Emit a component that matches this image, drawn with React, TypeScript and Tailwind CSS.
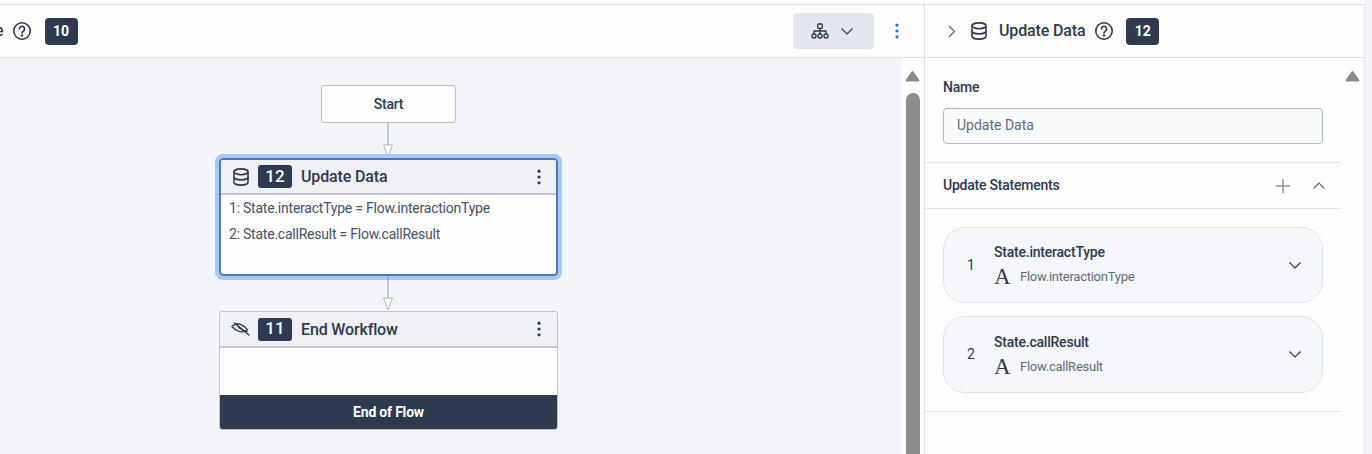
import React from "react";

const Help = () => (
  <svg width="20" height="20" viewBox="0 0 20 20" fill="none" stroke="#2d3a4f" strokeWidth="1.6" strokeLinecap="round" strokeLinejoin="round">
    <circle cx="10" cy="10" r="8.2" />
    <path d="M7.400 7.900a2.600 2.600 0 1 1 4.100 2.100c-1 .7-1.500 1-1.500 2.100" />
    <circle cx="10" cy="14.500" r=".5" fill="#2d3a4f" />
  </svg>
);

const Db = () => (
  <svg width="18" height="18" viewBox="0 0 18 18" fill="none" stroke="#2d3a4f" strokeWidth="1.6">
    <ellipse cx="9" cy="3.800" rx="7" ry="2.900" />
    <path d="M2 3.800v10.400c0 1.600 3.100 2.900 7 2.900s7-1.300 7-2.900V3.800" />
    <path d="M2 9c0 1.600 3.100 2.900 7 2.900s7-1.300 7-2.900" />
  </svg>
);

const Kebab = ({ color = "#2d3a4f" }: { color?: string }) => (
  <svg width="4" height="16" viewBox="0 0 4 16" fill={color}>
    <circle cx="2" cy="2.200" r="1.600" />
    <circle cx="2" cy="8" r="1.600" />
    <circle cx="2" cy="13.800" r="1.600" />
  </svg>
);

const Chevron = ({ up = false, color = "#2d3a4f" }: { up?: boolean; color?: string }) => (
  <svg width="12" height="7" viewBox="0 0 12 7" fill="none" stroke={color} strokeWidth="1.200">
    <path d={up ? "M.5 6.500L6 1l5.500 5.500" : "M.5.500L6 6 11.500.5"} />
  </svg>
);

const Hierarchy = () => (
  <svg width="18" height="16" viewBox="0 0 18 16" fill="none" stroke="#2d3a4f" strokeWidth="1.400">
    <rect x="6.800" y="1" width="4.400" height="4.400" rx=".8" />
    <path d="M9 5.400V8M3 11V8h12v3M9 8v3" />
    <circle cx="3" cy="13" r="2" />
    <circle cx="9" cy="13" r="2" />
    <circle cx="15" cy="13" r="2" />
  </svg>
);

const EyeOff = () => (
  <svg width="19" height="14" viewBox="0 0 19 14" fill="none" stroke="#2d3a4f" strokeWidth="1.300" strokeLinecap="round">
    <path d="M1 4.500C3.500 2 7 1 9.500 2.300c2.800 1.300 5.500 3 7 5.200-2 2.300-6 3-9 1.700C5 8.200 2.500 6.500 1 4.500z" />
    <path d="M6 1.800c1 3.500 4 6.800 10 7.500" />
    <path d="M3.500 1l14.500 12" />
  </svg>
);

const Arrow = ({ h }: { h: number }) => (
  <svg width="12" height={h} viewBox={`0 0 12 ${h}`} className="mr-[1px] block shrink-0">
    <path d={`M6 0V${h - 13}`} stroke="#8a9bb8" strokeWidth="1" />
    <path d={`M1.500 ${h - 13}h9L6 ${h - 1}z`} fill="#fdfdfe" stroke="#aab5c8" strokeWidth="1" />
  </svg>
);

const Triangle = () => (
  <svg width="15" height="12" viewBox="0 0 15 12" fill="#8c8c8c" stroke="#8c8c8c" strokeWidth="2" strokeLinejoin="round">
    <path d="M7.500 2L1.500 10.500h12z" />
  </svg>
);

const Badge = ({ n, big = false }: { n: string; big?: boolean }) => (
  <span
    className={
      big
        ? "flex h-[27px] w-[33px] shrink-0 items-center justify-center rounded-[4px] bg-[#2d3a4f] text-[14px] font-bold text-white"
        : "flex h-[23px] w-[34px] shrink-0 items-center justify-center rounded-[3px] bg-[#2d3a4f] text-[17px] font-medium text-white"
    }
  >
    {n}
  </span>
);

const Statement = ({ i, title, value, tall = false }: { i: string; title: string; value: string; tall?: boolean }) => (
  <div className={`flex items-center rounded-[22px] border border-[#dfe3ec] bg-[#f6f7fa] pr-[21px] ${tall ? "h-[77px]" : "h-[76px]"}`}>
    <span className="w-[50px] pl-[4px] text-center text-[14px] text-[#2d3a4f]">{i}</span>
    <div className="flex flex-1 flex-col pb-[1px]">
      <span className="text-[14px] leading-[20px] font-medium tracking-[-0.22px] text-[#2d3a4f]">{title}</span>
      <div className="mt-[5px] flex items-center gap-[9px]">
        <span className="w-[17px] text-[23px] leading-[20px] text-[#2d3a4f] [font-family:'Liberation_Serif',serif]">A</span>
        <span className="text-[13px] leading-[20px] tracking-[-0.25px] text-[#5f6b80]">{value}</span>
      </div>
    </div>
    <Chevron />
  </div>
);

export default function App() {
  return (
    <div className="h-[454px] w-[1372px] overflow-hidden bg-[#f4f5f8] font-['Roboto',sans-serif] text-[#2d3a4f]">
      <div className="h-[454px] w-[1365px] bg-[#fdfdfe] pt-[4px]">
        <div className="flex h-[450px] border-t border-[#d9dee8]">
          <div className="flex w-[925px] shrink-0 flex-col border-r border-[#d9dee8]">
            <div className="flex h-[53px] shrink-0 items-center border-b border-[#d9dee8]">
              <span className="ml-[-5px] text-[16px] font-medium">e</span>
              <span className="ml-[8px]"><Help /></span>
              <span className="ml-[13px]"><Badge n="10" big /></span>
              <button className="ml-[715px] flex h-[36px] w-[81px] items-center gap-[12px] rounded-[4px] bg-[#e2e6ef] pl-[18px]">
                <Hierarchy />
                <Chevron />
              </button>
              <span className="ml-[21px]"><Kebab color="#2f6fd0" /></span>
            </div>
            <div className="flex min-h-0 flex-1">
              <div className="flex w-[901px] shrink-0 flex-col bg-[#f3f5fa] pt-[27px] pl-[219px]">
                <div className="flex w-[339px] flex-col items-center">
                  <div className="flex h-[38px] w-[135px] items-center justify-center rounded-[3px] border border-[#b6bfcf] bg-[#fdfdfe] text-[14px] font-medium tracking-[-0.2px]">
                    Start
                  </div>
                  <Arrow h={35} />
                  <div className="h-[118px] w-[339px] overflow-hidden rounded-[4px] border-2 border-[#4a74c4] bg-[#fdfdfe] outline-[4px] outline-[#a9c8f5]">
                    <div className="flex h-[35px] items-center border-b-2 border-[#c3c9d6] bg-[#eff0f4] pr-[15px] pl-[11px]">
                      <Db />
                      <span className="ml-[8px]"><Badge n="12" /></span>
                      <span className="ml-[9px] flex-1 text-[16px] font-medium tracking-[-0.15px]">Update Data</span>
                      <Kebab />
                    </div>
                    <div className="pl-[8px] text-[14px] leading-[26px] tracking-[-0.23px] text-[#465268]">
                      <div>1: State.interactType = Flow.interactionType</div>
                      <div>2: State.callResult = Flow.callResult</div>
                    </div>
                  </div>
                  <Arrow h={35} />
                  <div className="h-[119px] w-[339px] overflow-hidden rounded-[3px] border border-[#bcc4d3] bg-[#fdfdfe]">
                    <div className="flex h-[36px] items-center border-b-2 border-[#c3c9d6] bg-[#eff0f4] pr-[16px] pl-[11px]">
                      <EyeOff />
                      <span className="ml-[8px]"><Badge n="11" /></span>
                      <span className="ml-[9px] flex-1 pt-[1px] text-[16px] font-medium tracking-[-0.15px]">End Workflow</span>
                      <Kebab />
                    </div>
                    <div className="h-[47px]" />
                    <div className="flex h-[35px] items-center justify-center bg-[#2d3a4f] text-[14px] font-bold tracking-[-0.2px] text-white">
                      End of Flow
                    </div>
                  </div>
                </div>
              </div>
              <div className="relative flex-1">
                <div className="absolute top-[12px] left-[4px]"><Triangle /></div>
                <div className="absolute top-[35px] left-[5px] h-[400px] w-[14px] rounded-t-[7px] bg-[#8c8c8c]" />
              </div>
            </div>
          </div>
          <div className="flex min-w-0 flex-1 flex-col border-r border-[#e3e5ec]">
            <div className="flex h-[53px] shrink-0 items-center border-b border-[#d9dee8] pl-[23px]">
              <svg width="8" height="13" viewBox="0 0 8 13" fill="none" stroke="#5f6b80" strokeWidth="1.300"><path d="M1 1l5.500 5.500L1 12" /></svg>
              <span className="ml-[14px]"><Db /></span>
              <span className="ml-[11px] text-[16px] font-medium tracking-[-0.15px]">Update Data</span>
              <span className="ml-[9px]"><Help /></span>
              <span className="ml-[12px]"><Badge n="12" big /></span>
            </div>
            <div className="flex min-h-0 flex-1">
              <div className="flex w-[416px] shrink-0 flex-col">
                <div className="flex h-[105px] flex-col border-b border-[#dfe3ec] pt-[20px] pl-[18px]">
                  <label className="text-[14px] leading-[18px] font-medium tracking-[-0.2px]">Name</label>
                  <div className="mt-[12px] flex h-[36px] w-[380px] items-center rounded-[4px] border border-[#b0b7c6] bg-[#f9fafc] pb-[1px] pl-[13px] text-[14px] text-[#5f6b80]">
                    Update Data
                  </div>
                </div>
                <div className="flex h-[46px] items-center border-b border-[#dfe3ec] pr-[16px] pl-[18px]">
                  <span className="flex-1 text-[14px] font-medium tracking-[-0.23px]">Update Statements</span>
                  <svg width="14" height="14" viewBox="0 0 14 14" stroke="#8a93a8" strokeWidth="1.500"><path d="M7 0v14M0 7h14" /></svg>
                  <span className="ml-[23px] flex"><Chevron up color="#5f6b80" /></span>
                </div>
                <div className="flex h-[203px] flex-col gap-[13px] border-b border-[#dfe3ec] px-[18px] pt-[18px]">
                  <Statement i="1" title="State.interactType" value="Flow.interactionType" />
                  <Statement i="2" title="State.callResult" value="Flow.callResult" tall />
                </div>
              </div>
              <div className="relative flex-1">
                <div className="absolute top-[12px] left-[4px]"><Triangle /></div>
              </div>
            </div>
          </div>
        </div>
      </div>
    </div>
  );
}
